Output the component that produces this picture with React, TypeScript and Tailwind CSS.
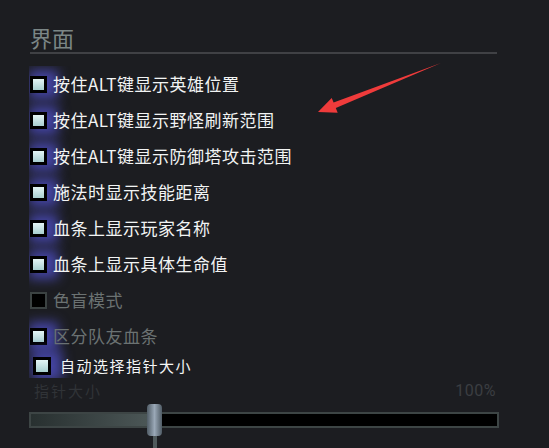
const items = [
  { label: "按住ALT键显示英雄位置", checked: true, dim: false },
  { label: "按住ALT键显示野怪刷新范围", checked: true, dim: false },
  { label: "按住ALT键显示防御塔攻击范围", checked: true, dim: false },
  { label: "施法时显示技能距离", checked: true, dim: false },
  { label: "血条上显示玩家名称", checked: true, dim: false },
  { label: "血条上显示具体生命值", checked: true, dim: false },
  { label: "色盲模式", checked: false, dim: true },
  { label: "区分队友血条", checked: true, dim: true },
];

const Box = ({ checked, big }: { checked: boolean; big?: boolean }) =>
  checked ? (
    <span
      className={`${big ? "w-[18px] h-[18px]" : "w-[17px] h-[17px]"} shrink-0 border-[3px] border-black bg-gradient-to-b from-[#e4f5f5] to-[#a8cfd0] shadow-[5px_0_12px_6px_rgba(82,82,205,0.75)]`}
    />
  ) : (
    <span className="w-[17px] h-[17px] shrink-0 border-2 border-[#3b4242] bg-black" />
  );

const App = () => (
  <div
    className="relative w-[549px] h-[448px] overflow-hidden bg-[#1c1d21]"
    style={{ fontFamily: '"Noto Sans CJK SC", "Noto Sans", sans-serif' }}
  >
    <div className="ml-[29px] w-[469px] pt-[24px]">
      <h2 className="pl-[1px] text-[22px] leading-[26px] text-[#7b8686]">界面</h2>
      <div className="mt-[2px] ml-[1px] h-[2px] w-[467px] bg-[#404145]" />

      <div className="mt-[12px] overflow-hidden">
        {items.map((it) => (
          <div key={it.label} className="flex h-[36px] items-center pl-[1px]">
            <Box checked={it.checked} />
            <span
              className={`ml-[6px] text-[17px] tracking-[0.5px] whitespace-nowrap ${
                it.dim ? "text-[#6b7272]" : "text-[#f2f4f4]"
              }`}
            >
              {it.label}
            </span>
          </div>
        ))}
        <div className="flex h-[24px] items-center pl-[4px]">
          <Box checked big />
          <span className="ml-[9px] text-[15px] tracking-[1.5px] text-[#f4f6f6] whitespace-nowrap">
            自动选择指针大小
          </span>
        </div>
      </div>

      <div className="flex h-[26px] items-center justify-between pl-[5px] pr-[2px]">
        <span className="text-[15px] tracking-[2px] text-[#303337]">指针大小</span>
        <span
          className="text-[16px] tracking-[0.5px] text-[#3b3e42]"
          style={{ fontFamily: "Roboto, sans-serif" }}
        >
          100%
        </span>
      </div>

      <div className="relative mt-[8px] h-[16px] w-[470px] border-2 border-[#3d4545] bg-black">
        <div className="h-full w-[119px] bg-gradient-to-r from-[#283030] to-[#4c5757]" />
        <div className="absolute left-[116px] top-[-10px] flex flex-col items-center">
          <div className="h-[32px] w-[15px] rounded-[4px] bg-gradient-to-r from-[#505c66] via-[#9aa8b7] to-[#505c66]" />
          <div className="h-[14px] w-[4px] bg-[#505a5c]" />
        </div>
      </div>
    </div>

    <svg className="absolute left-0 top-0" width="549" height="448">
      <polygon
        points="318,112 337.7,112.7 335.8,108.1 441,63 333.6,102.5 331.7,97.9"
        fill="#ef3b3b"
      />
    </svg>
  </div>
);

export default App;
